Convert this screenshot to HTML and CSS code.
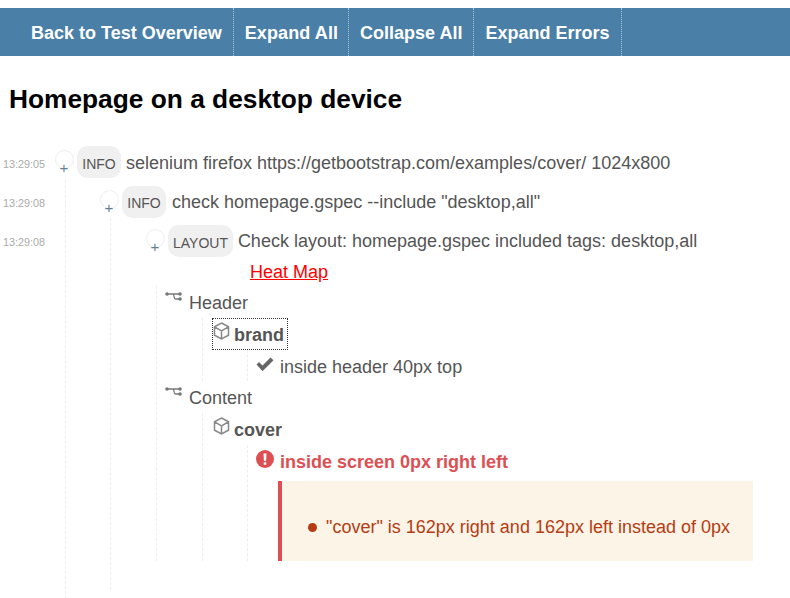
FILE: index.html
```html
<!DOCTYPE html>
<html lang="en">
<head>
<meta charset="utf-8">
<title>Homepage on a desktop device</title>
<link rel="stylesheet" href="styles.css">
</head>
<body>
<nav class="nav">
  <a class="nav-link" href="#">Back to Test Overview</a>
  <a class="nav-link" href="#">Expand All</a>
  <a class="nav-link" href="#">Collapse All</a>
  <a class="nav-link" href="#">Expand Errors</a>
</nav>
<h1 class="title">Homepage on a desktop device</h1>
<main class="report">
  <div class="node node-root">
    <div class="row row-first">
      <span class="time">13:29:05</span>
      <span class="toggle">+</span>
      <span class="badge badge-low">INFO</span>
      <span class="msg">selenium firefox https://getbootstrap.com/examples/cover/ 1024x800</span>
    </div>
    <div class="children children-1">
      <div class="node">
        <div class="row row-second">
          <span class="time">13:29:08</span>
          <span class="toggle">+</span>
          <span class="badge">INFO</span>
          <span class="msg">check homepage.gspec --include "desktop,all"</span>
        </div>
        <div class="children children-2">
          <div class="node">
            <div class="row">
              <span class="time">13:29:08</span>
              <span class="toggle">+</span>
              <span class="badge badge-low badge-layout">LAYOUT</span>
              <span class="msg">Check layout: homepage.gspec included tags: desktop,all</span>
            </div>
            <a class="heat" href="#">Heat Map</a>
            <div class="children children-3">
              <div class="group section">
                <svg class="ico ico-section" viewBox="0 0 17 12"><path d="M2 2h13M8 2c1.500 0 .5 5 2.500 5h4.500"/><circle cx="2" cy="2" r="1.800"/><circle cx="15" cy="2" r="1.800"/><circle cx="15" cy="7" r="1.800"/></svg>
                <span class="msg">Header</span>
              </div>
              <div class="obj-tree">
                <div class="group obj obj-focus">
                  <svg class="ico ico-cube" viewBox="0 0 17 18"><path d="M8.500 1l7 3.800v8.400l-7 3.800-7-3.800v-8.400zM1.500 4.800l7 4 7-4M8.500 8.800v8.200"/></svg>
                  <b class="msg">brand</b>
                </div>
                <div class="spec-tree">
                  <div class="group spec spec-short">
                    <svg class="ico ico-check" viewBox="0 0 18 14"><path d="M0.500 7.500l2.500-2.500 3.500 3.500 8-8 3 2.700-11 11z"/></svg>
                    <span class="msg">inside header 40px top</span>
                  </div>
                </div>
              </div>
              <div class="group section">
                <svg class="ico ico-section" viewBox="0 0 17 12"><path d="M2 2h13M8 2c1.500 0 .5 5 2.500 5h4.500"/><circle cx="2" cy="2" r="1.800"/><circle cx="15" cy="2" r="1.800"/><circle cx="15" cy="7" r="1.800"/></svg>
                <span class="msg">Content</span>
              </div>
              <div class="obj-tree">
                <div class="group obj">
                  <svg class="ico ico-cube" viewBox="0 0 17 18"><path d="M8.500 1l7 3.800v8.400l-7 3.800-7-3.800v-8.400zM1.500 4.800l7 4 7-4M8.500 8.800v8.200"/></svg>
                  <b class="msg">cover</b>
                </div>
                <div class="spec-tree">
                  <div class="group spec">
                    <svg class="ico ico-error" viewBox="0 0 18 18"><circle cx="9" cy="9" r="9"/><path class="mark" d="M7.500 3.500h3l-.4 7.500h-2.200zM7.700 12.300h2.600v2.500h-2.600z"/></svg>
                    <b class="msg msg-error">inside screen 0px right left</b>
                  </div>
                  <div class="error-box">
                    <ul class="error-list">
                      <li class="error-item">"cover" is 162px right and 162px left instead of 0px</li>
                    </ul>
                  </div>
                </div>
              </div>
            </div>
          </div>
        </div>
      </div>
    </div>
  </div>
</main>
</body>
</html>
```
FILE: styles.css
```css
html, body {
  margin: 0;
  padding: 0;
  height: 598px;
  overflow: hidden;
  background: #fff;
}
body {
  font-family: "Liberation Sans", Arial, sans-serif;
  font-size: 18px;
  color: #555;
  padding-top: 8px;
  box-sizing: border-box;
}
.nav {
  display: flex;
  height: 48px;
  padding-left: 20px;
  background: #4a80a8;
}
.nav-link {
  display: flex;
  align-items: center;
  padding: 2px 11px 0;
  border-right: 1px dotted #a9c3d6;
  color: #fff;
  font-weight: 700;
  font-size: 18px;
  text-decoration: none;
}
.nav-link:nth-child(2) {
  padding-right: 10px;
  letter-spacing: .1px;
}
.title {
  margin: 27px 0 0 9px;
  font-size: 26.300px;
  line-height: 33px;
  color: #000;
  font-weight: 700;
}
.report {
  position: relative;
  margin-top: 30px;
  padding-left: 55px;
}
.row {
  display: flex;
  align-items: flex-start;
  height: 32px;
}
.row .msg {
  margin-top: 6px;
  line-height: 20px;
}
.row-first .msg {
  margin-top: 7px;
}
.row-second .msg {
  margin-left: 6px;
}
.time {
  position: absolute;
  left: 3px;
  margin-top: 11px;
  font-size: 10.800px;
  color: #aaa;
}
.row-first .time {
  margin-top: 12px;
}
.toggle {
  box-sizing: border-box;
  flex: none;
  width: 19px;
  height: 19px;
  margin: 4px 3px 0 0;
  padding-right: 1px;
  border: 1px solid #eee;
  border-radius: 50%;
  color: #5f7f97;
  font-size: 15px;
  line-height: 33px;
  text-align: center;
}
.badge {
  flex: none;
  height: 32px;
  padding: 0 5.300px;
  border-radius: 11px;
  background: #f0f0f0;
  font-size: 14px;
  line-height: 34px;
}
.badge-low {
  line-height: 36px;
}
.badge-layout {
  padding: 0 5px;
}
.msg {
  margin-left: 4.900px;
}
.children {
  border-left: 1px dashed #eee;
}
.children-1 {
  margin: 2px 0 0 10px;
  padding: 6px 0 29px 34px;
}
.children-2 {
  margin: 0 0 0 10px;
  padding: 7px 0 29px 35px;
}
.heat {
  display: block;
  margin-left: 104px;
  height: 29px;
  line-height: 30px;
  color: #f00;
}
.children-3 {
  margin-left: 10px;
  padding-left: 8px;
}
.group {
  display: flex;
  align-items: flex-start;
  height: 32px;
  width: max-content;
}
.group .msg {
  margin-top: 7px;
  line-height: 20px;
}
.spec-short {
  height: 31px;
}
.ico {
  flex: none;
  fill: none;
  stroke: #777;
}
.ico-section {
  width: 17px;
  height: 12px;
  margin: 6px 2px 0 0;
  stroke-width: 1.300;
}
.ico-section circle {
  fill: #777;
  stroke: none;
}
.obj-tree {
  margin-left: 37px;
  padding-left: 10px;
  border-left: 1px dashed #eee;
}
.obj {
  margin-left: -1px;
  padding: 0 4px 0 1px;
}
.obj .msg {
  margin-left: 4px;
}
.obj-focus {
  outline: 1px dotted #333;
  outline-offset: -1px;
}
.ico-cube {
  width: 17px;
  height: 18px;
  margin-top: 4px;
  stroke: #888;
  stroke-width: 1.500;
}
.spec-tree {
  margin-left: 34px;
  padding-left: 8px;
  border-left: 1px dashed #eee;
}
.spec .msg {
  margin-left: 6px;
}
.ico-check {
  width: 18px;
  height: 14px;
  margin-top: 7px;
  fill: #666;
  stroke: none;
}
.ico-error {
  width: 18px;
  height: 18px;
  margin-top: 5px;
  fill: #dc4f53;
  stroke: none;
}
.ico-error .mark {
  fill: #fff;
}
.msg-error {
  color: #dc4f53;
}
.error-box {
  box-sizing: border-box;
  width: 475px;
  height: 80px;
  margin: 4px 0 0 22px;
  border-left: 4px solid #dc4f53;
  background: #fcf4e7;
  color: #b53c12;
}
.error-list {
  margin: 0;
  padding: 37px 0 0 26px;
  list-style: none;
  line-height: 18px;
}
.error-item {
  display: flex;
  align-items: center;
  gap: 9px;
}
.error-item::before {
  content: "";
  flex: none;
  width: 9px;
  height: 9px;
  border-radius: 50%;
  background: #b53c12;
}
```
